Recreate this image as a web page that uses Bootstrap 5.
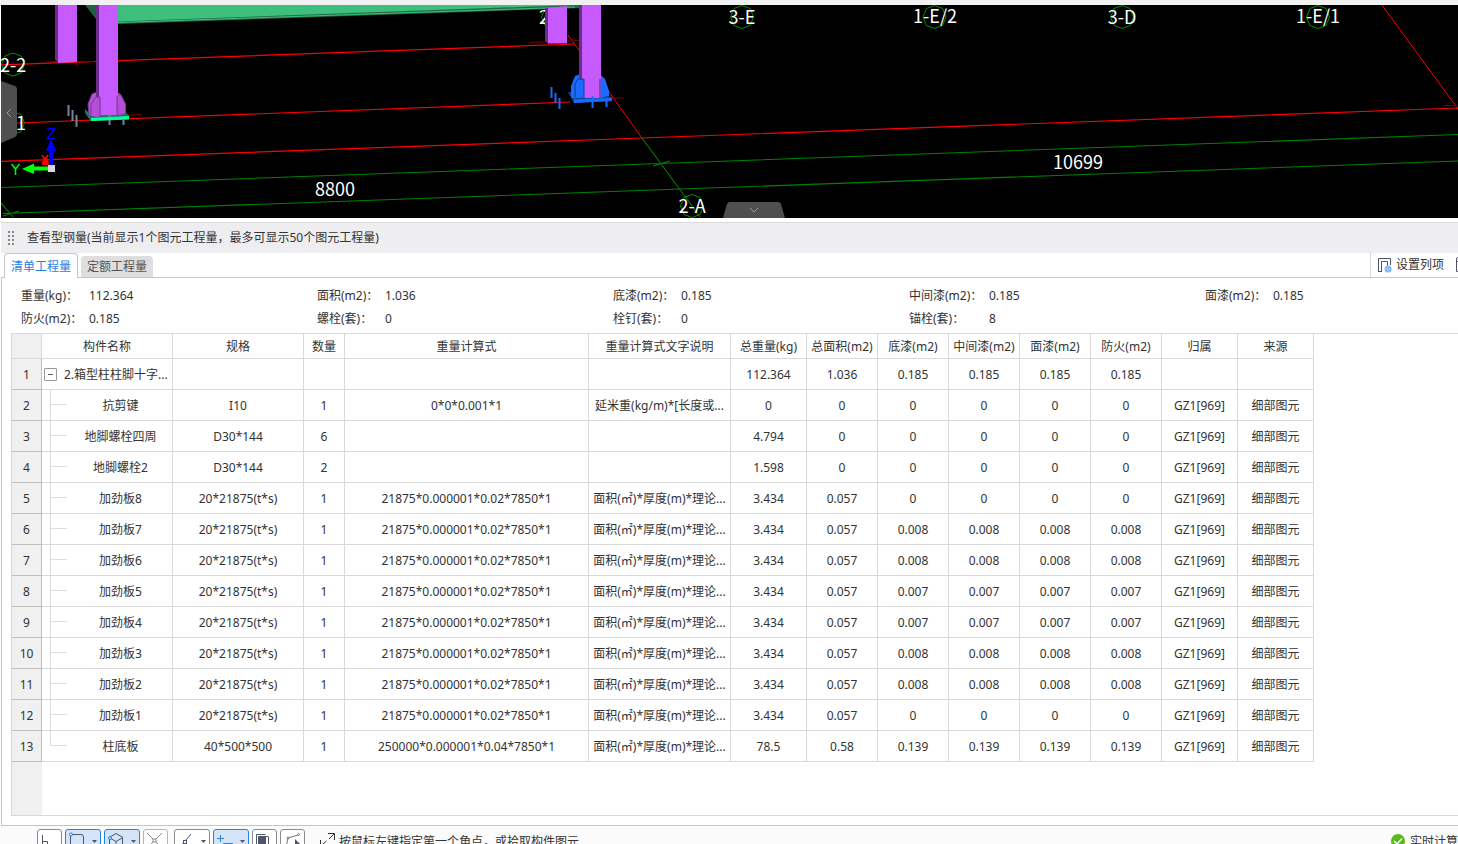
<!DOCTYPE html>
<html lang="zh-CN">
<head>
<meta charset="utf-8">
<meta name="viewport" content="width=device-width, initial-scale=1">
<title>查看型钢量</title>
<link rel="stylesheet" href="https://cdn.jsdelivr.net/npm/bootstrap@5.3.0/dist/css/bootstrap.min.css">
<style>
  body { font-family: "Noto Sans", "Noto Sans CJK SC", sans-serif; font-size: 12px; line-height: 18px; color: #333; background: #fff; }
  button { font: inherit; color: inherit; }
  .scene { height: 213px; margin: 5px 0 0 1px; background: #000; box-shadow: 0 -5px 0 #f1f1f1; }
  .scene-view text { font-family: "Noto Sans CJK SC", sans-serif; font-size: 18px; fill: #fff; text-anchor: middle; }
  .handle-left { left: 0; top: 76px; width: 16px; height: 63px; }
  .handle-down { left: 722px; bottom: 0; width: 62px; height: 16px; }
  .panel-title { height: 31px; margin: 4px 0 0 1px; padding-left: 7px; gap: 13px; background: #eeeef0; border-top: 1px solid #d9d9d9; }
  .panel-frame { margin-left: 1px; }
  .tab-strip { height: 25px; border-bottom: 1px solid #c3c5c9; padding-left: 3px; gap: 3px; }
  .qty-tab { border: 0; border-radius: 4px 4px 0 0; height: 21px; padding: 0 6px; background: #dedede; color: #555; }
  .qty-tab.active { height: 25px; padding-top: 2px; background: #fff; color: #2680e6; border: 1px solid #c3c5c9; border-bottom: 0; margin-bottom: -1px; }
  .strip-tools { height: 25px; border-left: 1px solid #d9d9d9; padding-left: 7px; gap: 12px; }
  .panel-body { border-left: 1px solid #c3c5c9; border-bottom: 1px solid #c3c5c9; padding: 7px 0 9px 9px; }
  .totals { grid-template-columns: repeat(5, 296px); row-gap: 5px; padding: 2px 0 5px 10px; }
  .totals dt { width: 68px; font-weight: 400; }
  .totals dt.wide-label { width: 80px; }
  .grid-box { border: 1px solid #d9d9d9; border-right: 0; background: linear-gradient(to right, #f0f0f0 30px, #fff 30px); }
  .qty-grid { table-layout: fixed; width: 1302px; border-collapse: separate; border-spacing: 0; background: #fff; text-align: center; }
  .qty-grid th, .qty-grid td { border-right: 1px solid #d9d9d9; border-bottom: 1px solid #d9d9d9; padding: 2px 0 0; font-weight: 400; white-space: nowrap; overflow: hidden; height: 31px; }
  .qty-grid thead th { height: 25px; }
  .qty-grid tr > :first-child { background: #f0f0f0; }
  .qty-grid tbody th { border-color: #bfbfbf; }
  .qty-grid .tree-child { position: relative; padding-left: 27px; }
  .tree-child::before { content: ""; position: absolute; left: 8px; top: 0; bottom: 0; border-left: 1px solid #dedede; }
  .tree-child::after { content: ""; position: absolute; left: 8px; top: 14px; width: 17px; border-top: 1px solid #dedede; }
  tr:last-child .tree-child::before { bottom: 16px; }
  .expander { width: 13px; height: 13px; border: 1px solid #999; border-radius: 1px; background: #fff; margin: 0 7px 3px 2px; }
  .status-bar { height: 18px; padding: 3px 0 0 37px; background: #fbfbfb; }
  .snap { height: 26px; width: 25px; border: 1px solid #8c8c8c; border-radius: 3px; background: #fff; padding: 0; margin-right: 3px; flex: none; }
  .snap svg { display: block; }
  .snap.menu { width: 36px; }
  .snap.on { border-color: #2680e6; background: #d6e4fa; }
  .snap.off { border-color: #b5b5b5; }
  .snap.group-end { margin-right: 6px; }
  .hint-icon { margin: 0 4px 0 12px; }
  .status-text { line-height: 26px; }
</style>
</head>
<body class="vh-100 overflow-hidden d-flex flex-column">

<main class="scene position-relative flex-shrink-0">
  <svg class="scene-view d-block w-100 h-100" viewBox="1 5 1457 213" preserveAspectRatio="xMinYMin slice" role="img" aria-label="三维视图">
    <!-- axis and dimension lines -->
    <g fill="none" stroke="#f00">
      <path d="M0 65L575 44M17 123L570 102M0 161.500L642 138L1458 108" stroke-width="1.200"/>
      <path d="M568 35L642 138M1382 5L1458 109"/>
      <path d="M47 61.500H95M529 42.500L580 40.500M125 115.500L141 114.500M600 98H624M1444 105.500H1456M75 62l3 5M559 42v5" stroke="#7a0000"/>
    </g>
    <g fill="none" stroke="#008200" stroke-width="1.100">
      <path d="M0 187.500L1458 134.500M3 213.500L1458 161M642 138L700 217M653 166L670 161M0 202L13 217M3 216L19 211"/>
    </g>
    <!-- grid bubbles -->
    <g fill="none" stroke="#009000">
      <path id="bubble" d="M742 5.500L750 8.500L753.500 17L750 25.500L742 28.500L734 25.500L730.500 17L734 8.500Z"/>
      <use href="#bubble" x="192.500"/><use href="#bubble" x="380"/><use href="#bubble" x="576"/>
      <use href="#bubble" x="-729" y="47.500"/><use href="#bubble" x="-729" y="106"/>
      <use href="#bubble" x="-50" y="189"/><use href="#bubble" x="-189"/>
    </g>
    <text x="742" y="24">3-E</text><text x="935" y="23">1-E/2</text><text x="1122" y="24">3-D</text><text x="1318" y="23">1-E/1</text>
    <text x="13" y="72">2-2</text><text x="21" y="130">1</text><text x="544" y="24">2</text>
    <text x="692" y="213">2-A</text><text x="335" y="196">8800</text><text x="1078" y="169">10699</text>
    <!-- beam -->
    <path d="M85 5H118V22L96 19Z" fill="#1e6340"/>
    <path d="M100 5H583V8L118 24Z" fill="#236b48"/>
    <path d="M118 5H575L118 21.500Z" fill="#3dbf7d"/>
    <path d="M118 22.500L575 7" stroke="#3dbf7d" fill="none"/>
    <!-- columns -->
    <path d="M55 5H59V62.500L55 60ZM545 8H549V44L545 41Z" fill="#6b2c8b"/>
    <path d="M58 5H77V62L58 63ZM548 8L567 6V43.500H548Z" fill="#c65aff"/>
    <!-- left base plate -->
    <path d="M85 109L92 116L91 121L85 113Z" fill="#0b8456"/>
    <path d="M86 114L124 110L129 116V119L91 121Z" fill="#0b8456"/>
    <path d="M91 118L129 116V119.500L91 121Z" fill="#00ff9d"/>
    <path d="M88 104L92 94L97 92V116H89ZM117 92L121 95L125.500 104V114L118 116Z" fill="#b450d6" stroke="#7b3292"/>
    <path d="M96 5H100V98H96Z" fill="#6b2c8b"/>
    <path d="M99 5H118V115H99Z" fill="#c65aff"/>
    <path d="M91 116V104L96 97H100V117M117 115V97L119 95" fill="#b450d6" stroke="#7b3292"/>
    <path d="M68.500 105V116M72.500 110V121M76.500 115V127M109.500 120V125M123.500 119V125M109.500 114v3" stroke="#74859a" stroke-width="2"/>
    <!-- selected base plate -->
    <path d="M568 92L612 97V101L574 103Z" fill="#0c469e"/>
    <path d="M571 95V86L575 76L580 74V98H572ZM600 74L605 79L609 91V96L600 98Z" fill="#1a6aff"/>
    <path d="M579 5H582V80H579Z" fill="#6b2c8b"/>
    <path d="M582 5H601V98H582Z" fill="#c65aff"/>
    <path d="M575 97V84L578 79H584V98M600 98V79" fill="#1a6aff" stroke="#0b3f91"/>
    <path d="M574 99.500L612 98V101L574 103Z" fill="#1a6aff"/>
    <path d="M551.500 87V98M555.500 93V103M559.500 98V109M592.500 102V108M606.500 101V107M592.500 96v3" stroke="#1a6aff" stroke-width="2"/>
    <!-- orientation axes -->
    <path d="M51 165V150" stroke="#00f" stroke-width="4"/>
    <path d="M51 139L56 151H46Z" fill="#00f"/>
    <path d="M48 168.500H33" stroke="#0f0" stroke-width="4"/>
    <path d="M22 169L34 163.500V174Z" fill="#0f0"/>
    <path d="M42 165L44 157L48 159L49 165Z" fill="#f00"/>
    <path d="M42 155L48 164M48 155L42 164" stroke="#f00" stroke-width="1.500"/>
    <path d="M11.500 164L15.500 169L19.500 164M15.500 169V175" stroke="#0f0" stroke-width="1.500" fill="none"/>
    <path d="M47 128.500H54.500L47.500 138.500H55" stroke="#00f" stroke-width="1.500" fill="none"/>
    <path d="M48 165H55V172H48Z" fill="#d8d8d8"/>
  </svg>
  <button class="handle-left position-absolute border-0 p-0 bg-transparent" type="button" aria-label="展开左侧面板">
    <svg class="d-block" width="16" height="63"><path d="M0 0L14 5Q16 6 16 8V53Q16 55 14 56L0 62Z" fill="#4f4f4f"/><path d="M10 28L6 32L10 36" fill="none" stroke="#999"/></svg>
  </button>
  <button class="handle-down position-absolute border-0 p-0 bg-transparent" type="button" aria-label="收起下方面板">
    <svg class="d-block" width="62" height="16"><path d="M0 16L4 2Q5 0 7 0H55Q57 0 58 2L62 16Z" fill="#4f4f4f"/><path d="M27 6L31 10L35 6" fill="none" stroke="#999"/></svg>
  </button>
</main>

<header class="panel-title d-flex align-items-center flex-shrink-0">
  <svg width="6" height="14" fill="#888"><path d="M0 0h2v2H0zM4 0h2v2H4zM0 4h2v2H0zM4 4h2v2H4zM0 8h2v2H0zM4 8h2v2H4zM0 12h2v2H0zM4 12h2v2H4z"/></svg>
  <span>查看型钢量(当前显示1个图元工程量，最多可显示50个图元工程量)</span>
</header>

<section class="panel-frame flex-grow-1 d-flex flex-column">
  <div class="tab-strip d-flex align-items-end flex-shrink-0" role="tablist">
    <button class="qty-tab active" type="button" role="tab" aria-selected="true">清单工程量</button>
    <button class="qty-tab" type="button" role="tab" aria-selected="false">定额工程量</button>
    <div class="strip-tools ms-auto d-flex align-items-center">
      <button class="d-flex align-items-center border-0 bg-transparent p-0" type="button">
        <svg class="me-1" width="14" height="16" fill="none" stroke="#4d5566"><path d="M.5 15V1.500H12.500V8M3.500 15V4.500H9.500V9M.5 14.500H3"/><circle cx="10" cy="12" r="3.500" fill="#80b5ff" stroke="none"/><path d="M7 12h6M10 9v6" stroke="#c6deff" stroke-dasharray="1 1"/></svg>
        设置列项
      </button>
      <svg width="2" height="16" fill="none" stroke="#4d5566"><path d="M3 .5H1.500Q.5 .5 .5 2V14.500H3M.5 4.500H3"/></svg>
    </div>
  </div>

  <div class="panel-body flex-grow-1 d-flex flex-column">
    <dl class="totals d-grid m-0">
      <div class="d-flex"><dt>重量(kg)：</dt><dd class="m-0">112.364</dd></div>
      <div class="d-flex"><dt>面积(m2)：</dt><dd class="m-0">1.036</dd></div>
      <div class="d-flex"><dt>底漆(m2)：</dt><dd class="m-0">0.185</dd></div>
      <div class="d-flex"><dt class="wide-label">中间漆(m2)：</dt><dd class="m-0">0.185</dd></div>
      <div class="d-flex"><dt>面漆(m2)：</dt><dd class="m-0">0.185</dd></div>
      <div class="d-flex"><dt>防火(m2)：</dt><dd class="m-0">0.185</dd></div>
      <div class="d-flex"><dt>螺栓(套)：</dt><dd class="m-0">0</dd></div>
      <div class="d-flex"><dt>栓钉(套)：</dt><dd class="m-0">0</dd></div>
      <div class="d-flex"><dt class="wide-label">锚栓(套)：</dt><dd class="m-0">8</dd></div>
    </dl>

    <div class="grid-box flex-grow-1">
      <table class="qty-grid">
        <colgroup>
          <col width="30"><col width="131"><col width="131"><col width="41"><col width="244"><col width="142"><col width="76">
          <col width="71"><col width="71"><col width="71"><col width="71"><col width="71"><col width="76"><col width="76">
        </colgroup>
        <thead>
          <tr><th></th><th>构件名称</th><th>规格</th><th>数量</th><th>重量计算式</th><th>重量计算式文字说明</th><th>总重量(kg)</th><th>总面积(m2)</th><th>底漆(m2)</th><th>中间漆(m2)</th><th>面漆(m2)</th><th>防火(m2)</th><th>归属</th><th>来源</th></tr>
        </thead>
        <tbody id="rows">
          <tr><th>1</th><td class="text-start"><button class="expander p-0 align-middle" type="button" aria-label="折叠"><svg class="d-block" width="11" height="11"><path d="M3 5.500H8" stroke="#555"/></svg></button>2.箱型柱柱脚十字...</td><td></td><td></td><td></td><td></td><td>112.364</td><td>1.036</td><td>0.185</td><td>0.185</td><td>0.185</td><td>0.185</td><td></td><td></td></tr>
        </tbody>
      </table>
    </div>
  </div>
</section>

<footer class="status-bar d-flex align-items-start flex-shrink-0 overflow-hidden">
  <button class="snap" type="button" aria-label="正交"><svg width="23" height="24" fill="none" stroke="#4d5566"><path d="M4.500 5V19M4.500 11.500H9.500V19"/></svg></button>
  <button class="snap menu on" type="button" aria-label="矩形"><svg width="34" height="24" fill="none" stroke="#4d5566"><path d="M6 4.500H15Q17.500 4.500 17.500 7V19M4.500 6V19"/><circle cx="5" cy="4.500" r="1.500" fill="#d6e4fa" stroke="#2680e6"/><path d="M26 10H31L28.500 13Z" fill="#4d5566" stroke="none"/></svg></button>
  <button class="snap menu on" type="button" aria-label="三维"><svg width="34" height="24" fill="none" stroke="#4d5566"><path d="M4 7.500L11 3.500L18 7.500L11 11.500ZM4.500 9V18L11 21L17.500 18V8M11 12V20"/><circle cx="5" cy="8" r="1.500" fill="#d6e4fa" stroke="#2680e6"/><path d="M26 10H31L28.500 13Z" fill="#4d5566" stroke="none"/></svg></button>
  <button class="snap off group-end" type="button" aria-label="交点"><svg width="23" height="24" fill="none" stroke="#888"><path d="M3 3L18 18M18 3L3 18"/><rect x="9" y="9" width="3" height="3" fill="#fff"/></svg></button>
  <button class="snap menu" type="button" aria-label="中点"><svg width="34" height="24" fill="none" stroke="#4d5566"><path d="M16 4L5 17"/><rect x="8.500" y="10.500" width="3" height="3" fill="#fff"/><path d="M26 10H31L28.500 13Z" fill="#4d5566" stroke="none"/></svg></button>
  <button class="snap menu on" type="button" aria-label="偏移"><svg width="34" height="24" fill="none" stroke="#2680e6"><path d="M3 8.500H10M6.500 5V12M9 13.500H19"/><path d="M26 10H31L28.500 13Z" fill="#4d5566" stroke="none"/></svg></button>
  <button class="snap" type="button" aria-label="图层"><svg width="23" height="24" fill="none" stroke="#4d5566"><path d="M3.500 17V4.500H12.500M15.500 7V17M12 6.500H15.500"/><rect x="5.500" y="6.500" width="7" height="8" fill="#4d5566"/></svg></button>
  <button class="snap" type="button" aria-label="多边形"><svg width="23" height="24" fill="none" stroke="#777"><path d="M5 17L7 8L17 5"/><circle cx="7" cy="8" r="1" fill="#fff"/><circle cx="17.500" cy="4.500" r="1" fill="#fff"/><path d="M14 9L19 14H14Z" fill="#4d5566" stroke="none"/></svg></button>
  <svg class="hint-icon flex-shrink-0" width="15" height="20" fill="none" stroke="#333"><path d="M8 4.500H14.500V11M14 5L9 10M6.500 12L1 17M.5 11V17.500H7"/></svg>
  <span class="status-text text-nowrap">按鼠标左键指定第一个角点，或拾取构件图元</span>
  <span class="ms-auto d-flex text-nowrap">
    <svg class="me-1 flex-shrink-0" width="16" height="24"><circle cx="8" cy="12" r="7" fill="#5cb81c"/><path d="M4 12L7 15L12 9.500" fill="none" stroke="#fff" stroke-width="1.500"/></svg>
    <span class="status-text">实时计算</span>
  </span>
</footer>

<script>
  const plate = '面积(㎡)*厚度(m)*理论...';
  // name, spec, count, formula, description, weight, area, primer, middle coat, top coat, fireproofing
  const stiffener = (n, coat) => ['加劲板' + n, '20*21875(t*s)', 1, '21875*0.000001*0.02*7850*1', plate, '3.434', '0.057', coat, coat, coat, coat];
  const parts = [
    ['抗剪键', 'I10', 1, '0*0*0.001*1', '延米重(kg/m)*[长度或...', 0, 0, 0, 0, 0, 0],
    ['地脚螺栓四周', 'D30*144', 6, '', '', '4.794', 0, 0, 0, 0, 0],
    ['地脚螺栓2', 'D30*144', 2, '', '', '1.598', 0, 0, 0, 0, 0],
    stiffener(8, '0'), stiffener(7, '0.008'), stiffener(6, '0.008'), stiffener(5, '0.007'),
    stiffener(4, '0.007'), stiffener(3, '0.008'), stiffener(2, '0.008'), stiffener(1, '0'),
    ['柱底板', '40*500*500', 1, '250000*0.000001*0.04*7850*1', plate, '78.5', '0.58', '0.139', '0.139', '0.139', '0.139']
  ];
  document.getElementById('rows').insertAdjacentHTML('beforeend', parts.map((p, i) =>
    `<tr><th>${i + 2}</th>` + [...p, 'GZ1[969]', '细部图元'].map((v, c) => `<td${c ? '' : ' class="tree-child"'}>${v}</td>`).join('') + '</tr>').join(''));
</script>
<script src="https://cdn.jsdelivr.net/npm/bootstrap@5.3.0/dist/js/bootstrap.bundle.min.js"></script>
</body>
</html>
